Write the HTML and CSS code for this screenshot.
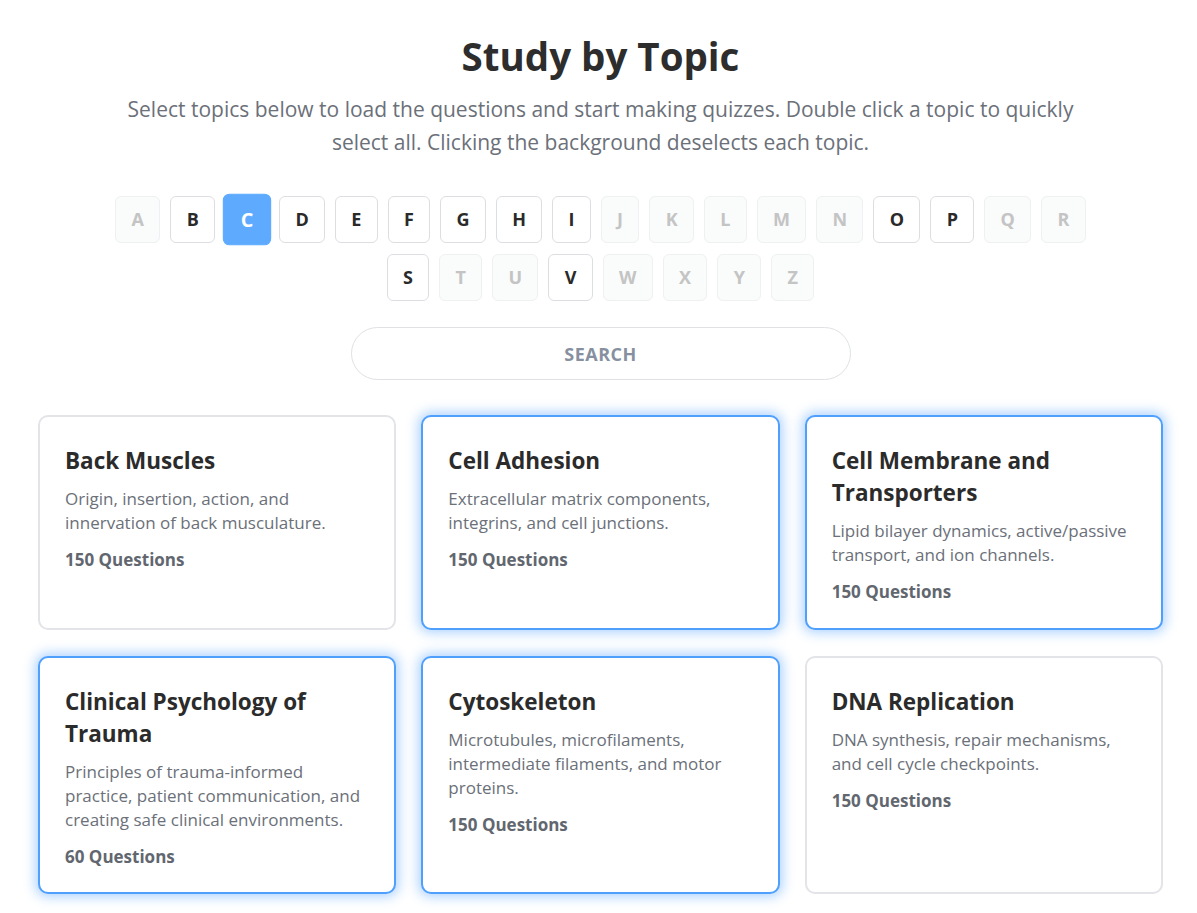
FILE: index.html
```html
<!DOCTYPE html>
<html lang="en">
<head>
<meta charset="utf-8">
<title>Study by Topic</title>
<link rel="stylesheet" href="styles.css">
</head>
<body>
<main class="page">
  <header class="intro">
    <h1 class="title">Study by Topic</h1>
    <p class="subtitle">Select topics below to load the questions and start making quizzes. Double click a topic to quickly select all. Clicking the background deselects each topic.</p>
  </header>

  <nav class="letters">
    <button class="letter disabled">A</button>
    <button class="letter">B</button>
    <button class="letter active">C</button>
    <button class="letter">D</button>
    <button class="letter">E</button>
    <button class="letter">F</button>
    <button class="letter">G</button>
    <button class="letter">H</button>
    <button class="letter">I</button>
    <button class="letter disabled">J</button>
    <button class="letter disabled">K</button>
    <button class="letter disabled">L</button>
    <button class="letter disabled">M</button>
    <button class="letter disabled">N</button>
    <button class="letter">O</button>
    <button class="letter">P</button>
    <button class="letter disabled">Q</button>
    <button class="letter disabled">R</button>
    <button class="letter">S</button>
    <button class="letter disabled">T</button>
    <button class="letter disabled">U</button>
    <button class="letter">V</button>
    <button class="letter disabled">W</button>
    <button class="letter disabled">X</button>
    <button class="letter disabled">Y</button>
    <button class="letter disabled">Z</button>
  </nav>

  <div class="search-wrap">
    <input class="search" type="text" placeholder="SEARCH">
  </div>

  <section class="grid">
    <article class="card">
      <h2 class="card-title">Back Muscles</h2>
      <p class="card-desc">Origin, insertion, action, and innervation of back musculature.</p>
      <p class="card-count">150 Questions</p>
    </article>
    <article class="card selected">
      <h2 class="card-title">Cell Adhesion</h2>
      <p class="card-desc">Extracellular matrix components, integrins, and cell junctions.</p>
      <p class="card-count">150 Questions</p>
    </article>
    <article class="card selected">
      <h2 class="card-title">Cell Membrane and Transporters</h2>
      <p class="card-desc">Lipid bilayer dynamics, active/passive transport, and ion channels.</p>
      <p class="card-count">150 Questions</p>
    </article>
    <article class="card selected">
      <h2 class="card-title">Clinical Psychology of Trauma</h2>
      <p class="card-desc">Principles of trauma-informed practice, patient communication, and creating safe clinical environments.</p>
      <p class="card-count">60 Questions</p>
    </article>
    <article class="card selected">
      <h2 class="card-title">Cytoskeleton</h2>
      <p class="card-desc">Microtubules, microfilaments, intermediate filaments, and motor proteins.</p>
      <p class="card-count">150 Questions</p>
    </article>
    <article class="card">
      <h2 class="card-title">DNA Replication</h2>
      <p class="card-desc">DNA synthesis, repair mechanisms, and cell cycle checkpoints.</p>
      <p class="card-count">150 Questions</p>
    </article>
  </section>
</main>
</body>
</html>
```

FILE: styles.css
```css
* {
  box-sizing: border-box;
}

html, body {
  margin: 0;
  padding: 0;
  background: #ffffff;
}

body {
  font-family: "Open Sans", "Noto Sans", "Liberation Sans", sans-serif;
  color: #2d2d2d;
}

.page {
  max-width: 1125px;
  margin: 0 auto;
  padding: 34px 0 40px;
  position: relative;
  left: 2px;
}

.intro {
  text-align: center;
}

.title {
  margin: 0;
  font-size: 38.5px;
  line-height: 44px;
  font-weight: 700;
  color: #2d2d2d;
}

.subtitle {
  max-width: 960px;
  margin: 15px auto 0;
  font-size: 21px;
  line-height: 33px;
  color: #6b7079;
}

.letters {
  max-width: 990px;
  margin: 37px auto 0;
  display: flex;
  flex-wrap: wrap;
  justify-content: center;
  gap: 11px 10px;
}

.letter {
  font-family: inherit;
  font-size: 18px;
  font-weight: 700;
  line-height: 25px;
  padding: 10px 15.3px;
  min-width: 38px;
  border: 1px solid #dcdee2;
  border-radius: 6px;
  background: #ffffff;
  color: #2a2a2a;
  cursor: pointer;
}

.letter.disabled {
  background: #fafbfb;
  border-color: #eff0f1;
  color: #c4c4c4;
  cursor: default;
}

.letter.active {
  background: #5eaaff;
  border-color: #5eaaff;
  color: #ffffff;
  transform: scale(1.1);
}

.search-wrap {
  display: flex;
  justify-content: center;
  margin-top: 26px;
}

.search {
  width: 500px;
  height: 53px;
  border: 1px solid #e0e1e4;
  border-radius: 27px;
  background: #ffffff;
  text-align: center;
  font-family: inherit;
  font-size: 18px;
  letter-spacing: 0.5px;
  font-weight: 700;
  color: #333;
  outline: none;
}

.search::placeholder {
  color: #8790a0;
  font-weight: 700;
}

.grid {
  margin-top: 35px;
  display: grid;
  grid-template-columns: repeat(3, 1fr);
  gap: 26px 25px;
}

.card {
  border: 2px solid #e2e4e8;
  border-radius: 10px;
  background: #ffffff;
  padding: 28px 25px 23px;
  min-height: 215px;
}

.card.selected {
  border-color: #4f9ffc;
  box-shadow: 0 0 12px 3px rgba(80, 160, 255, 0.45);
}

.card-title {
  margin: 0;
  font-size: 22.5px;
  line-height: 32px;
  font-weight: 700;
  color: #2b2b2b;
}

.card-desc {
  margin: 10px 0 0;
  font-size: 17px;
  line-height: 24px;
  color: #6b7079;
}

.card-count {
  margin: 13px 0 0;
  font-size: 17px;
  line-height: 24px;
  font-weight: 700;
  color: #62676f;
}
```
